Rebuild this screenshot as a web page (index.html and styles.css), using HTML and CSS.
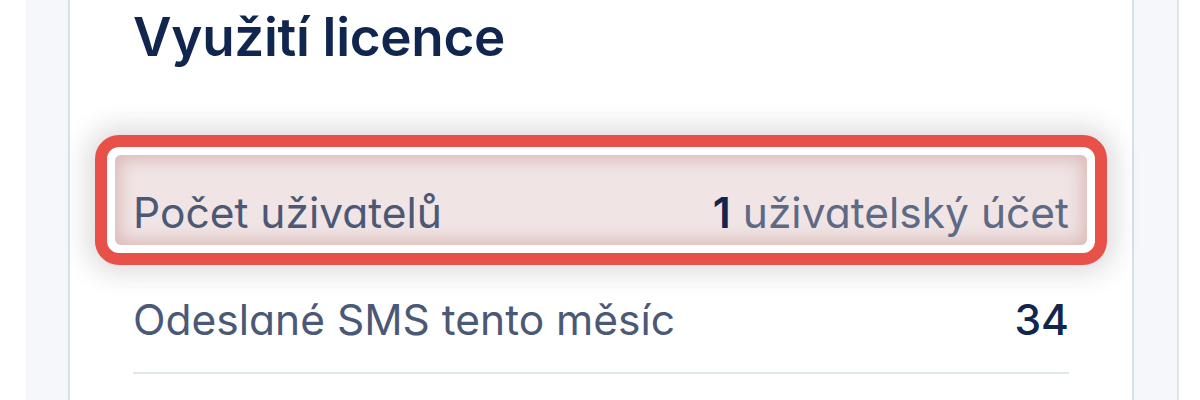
FILE: index.html
```html
<!DOCTYPE html>
<html lang="cs">
<head>
<meta charset="utf-8">
<title>Využití licence</title>
<link rel="stylesheet" href="styles.css">
</head>
<body>
<div class="page">
  <section class="card">
    <h2 class="title">Využití licence</h2>
    <div class="highlight">
      <div class="row row-hl">
        <span class="label">Počet uživatelů</span>
        <span class="value"><b>1</b> uživatelský účet</span>
      </div>
    </div>
    <div class="row row-plain">
      <span class="label">Odeslané SMS tento měsíc</span>
      <span class="value"><b class="count">34</b></span>
    </div>
  </section>
</div>
</body>
</html>
```
FILE: styles.css
```css
html, body {
  margin: 0;
  padding: 0;
  background: #ffffff;
  height: 100%;
  overflow: hidden;
}
body {
  font-family: "Inter", "Noto Sans", sans-serif;
  font-feature-settings: "cv11" 1;
}
.page {
  margin-left: 26px;
  width: 1153px;
  height: 400px;
  background: #f5f7fa;
  border-right: 2px solid #dbe7ef;
  padding: 0 43px 0 42px;
  box-sizing: border-box;
}
.card {
  background: #ffffff;
  border-left: 2px solid #d3e4e8;
  border-right: 2px solid #d3e4e8;
  height: 100%;
  box-sizing: border-box;
  padding: 4px 25px 0 25px;
}
.title {
  margin: 0 0 65px 38px;
  font-size: 53px;
  line-height: 66px;
  font-weight: 600;
  color: #10264f;
  letter-spacing: -0.3px;
}
.highlight {
  border: 12px solid #e8504a;
  border-radius: 24px;
  padding: 8px;
  background: #ffffff;
  box-shadow: 0 0 26px 8px rgba(60, 40, 40, 0.17);
}
.row {
  display: flex;
  justify-content: space-between;
  align-items: baseline;
  font-size: 42.5px;
  line-height: 50px;
  color: #4b5876;
}
.row-hl {
  height: 90px;
  box-sizing: border-box;
  padding: 33px 18px 7px 18px;
  border-radius: 6px;
  background: #f0e4e4;
  box-shadow: inset 0 0 16px 5px rgba(190, 120, 120, 0.38);
}
.row-plain {
  margin: 30px 38px 0 38px;
  padding-bottom: 27px;
  border-bottom: 2px solid #dde9ec;
}
.value {
  color: #5e6a85;
}
.value b {
  font-weight: 600;
  color: #10264f;
}
.value .count {
  font-weight: 500;
}
```
